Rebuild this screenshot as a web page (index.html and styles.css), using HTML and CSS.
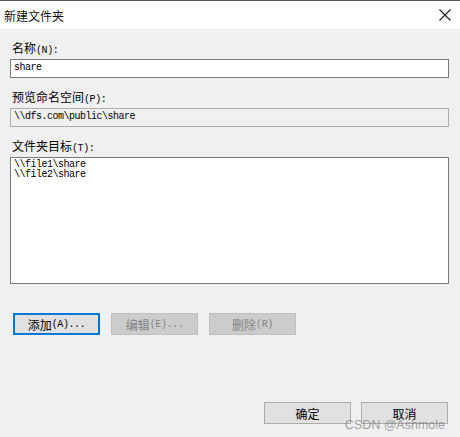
FILE: index.html
```html
<!DOCTYPE html>
<html lang="zh-CN">
<head>
    <meta charset="UTF-8">
    <title>新建文件夹</title>
    <link rel="stylesheet" href="styles.css">
</head>
<body>
    <div class="dialog">
        <div class="titlebar">
            <span class="title">新建文件夹</span>
            <span class="close">
                <svg width="14" height="14" viewBox="0 0 14 14"><path d="M1.5 1.5L12.5 12.5M12.5 1.5L1.5 12.5" stroke="#222" stroke-width="1.2" fill="none"/></svg>
            </span>
        </div>
        <div class="content">
            <div class="label">名称<span class="mono">(N):</span></div>
            <div class="field">share</div>

            <div class="label">预览命名空间<span class="mono">(P):</span></div>
            <div class="field readonly">\\dfs.com\public\share</div>

            <div class="label">文件夹目标<span class="mono">(T):</span></div>
            <div class="field list">\\file1\share<br>\\file2\share</div>

            <div class="row">
                <button class="btn focus">添加<span class="mono">(A)...</span></button>
                <button class="btn" disabled>编辑<span class="mono">(E)...</span></button>
                <button class="btn" disabled>删除<span class="mono">(R)</span></button>
            </div>

            <div class="footer">
                <button class="btn">确定</button>
                <button class="btn">取消</button>
            </div>
        </div>
        <div class="watermark">CSDN @Ashmole</div>
    </div>
</body>
</html>
```

FILE: styles.css
```css
html, body { margin: 0; padding: 0; }
body { background: #f0f0f0; font-family: "Noto Sans CJK SC", "Noto Sans", sans-serif; font-size: 12px; color: #000; }

.dialog { position: relative; width: 460px; height: 437px; background: #f0f0f0; }

.titlebar {
    height: 28px;
    background: #fff;
    border-top: 1px solid #555;
    display: flex;
    align-items: center;
    justify-content: space-between;
    padding: 0 8px 0 4px;
}
.title { font-size: 12px; color: #111; }
.close { display: flex; }

.content { padding: 11px 11px 0 10px; display: flex; flex-direction: column; }

.label { height: 16px; font-size: 12px; line-height: 16px; padding-left: 2px; margin-bottom: 3px; overflow: hidden; }
.mono { font-family: "Liberation Mono", monospace; font-size: 10px; letter-spacing: -0.4px; }

.field {
    box-sizing: border-box;
    height: 19px;
    background: #fff;
    border: 1px solid #7a7a7a;
    font-family: "Liberation Mono", monospace;
    font-size: 10px;
    letter-spacing: -0.5px;
    line-height: 16px;
    padding: 0 3px;
    margin-bottom: 11px;
    white-space: nowrap;
}
.field.readonly { background: #f0f0f0; border-color: #adadad; }
.field.list { height: 127px; line-height: 10px; padding-top: 2px; margin-bottom: 29px; }

.row { display: flex; gap: 11px; padding-left: 3px; }

.btn {
    box-sizing: border-box;
    width: 87px;
    height: 22px;
    background: #e1e1e1;
    border: 1px solid #adadad;
    font-family: "Noto Sans CJK SC", sans-serif;
    font-size: 12px;
    color: #000;
    padding: 0;
    display: flex;
    align-items: center;
    justify-content: center;
}
.btn .mono { font-size: 10px; }
.btn.focus { border: 2px solid #0078d7; }
.btn:disabled { background: #cccccc; border-color: #bfbfbf; color: #838383; }

.footer { display: flex; justify-content: flex-end; gap: 10px; margin-top: 67px; padding-right: 1px; }

.watermark {
    position: absolute;
    right: 15px;
    bottom: 5px;
    font-family: "Liberation Sans", sans-serif;
    font-size: 12.5px;
    color: rgba(90, 90, 90, 0.55);
}
```
